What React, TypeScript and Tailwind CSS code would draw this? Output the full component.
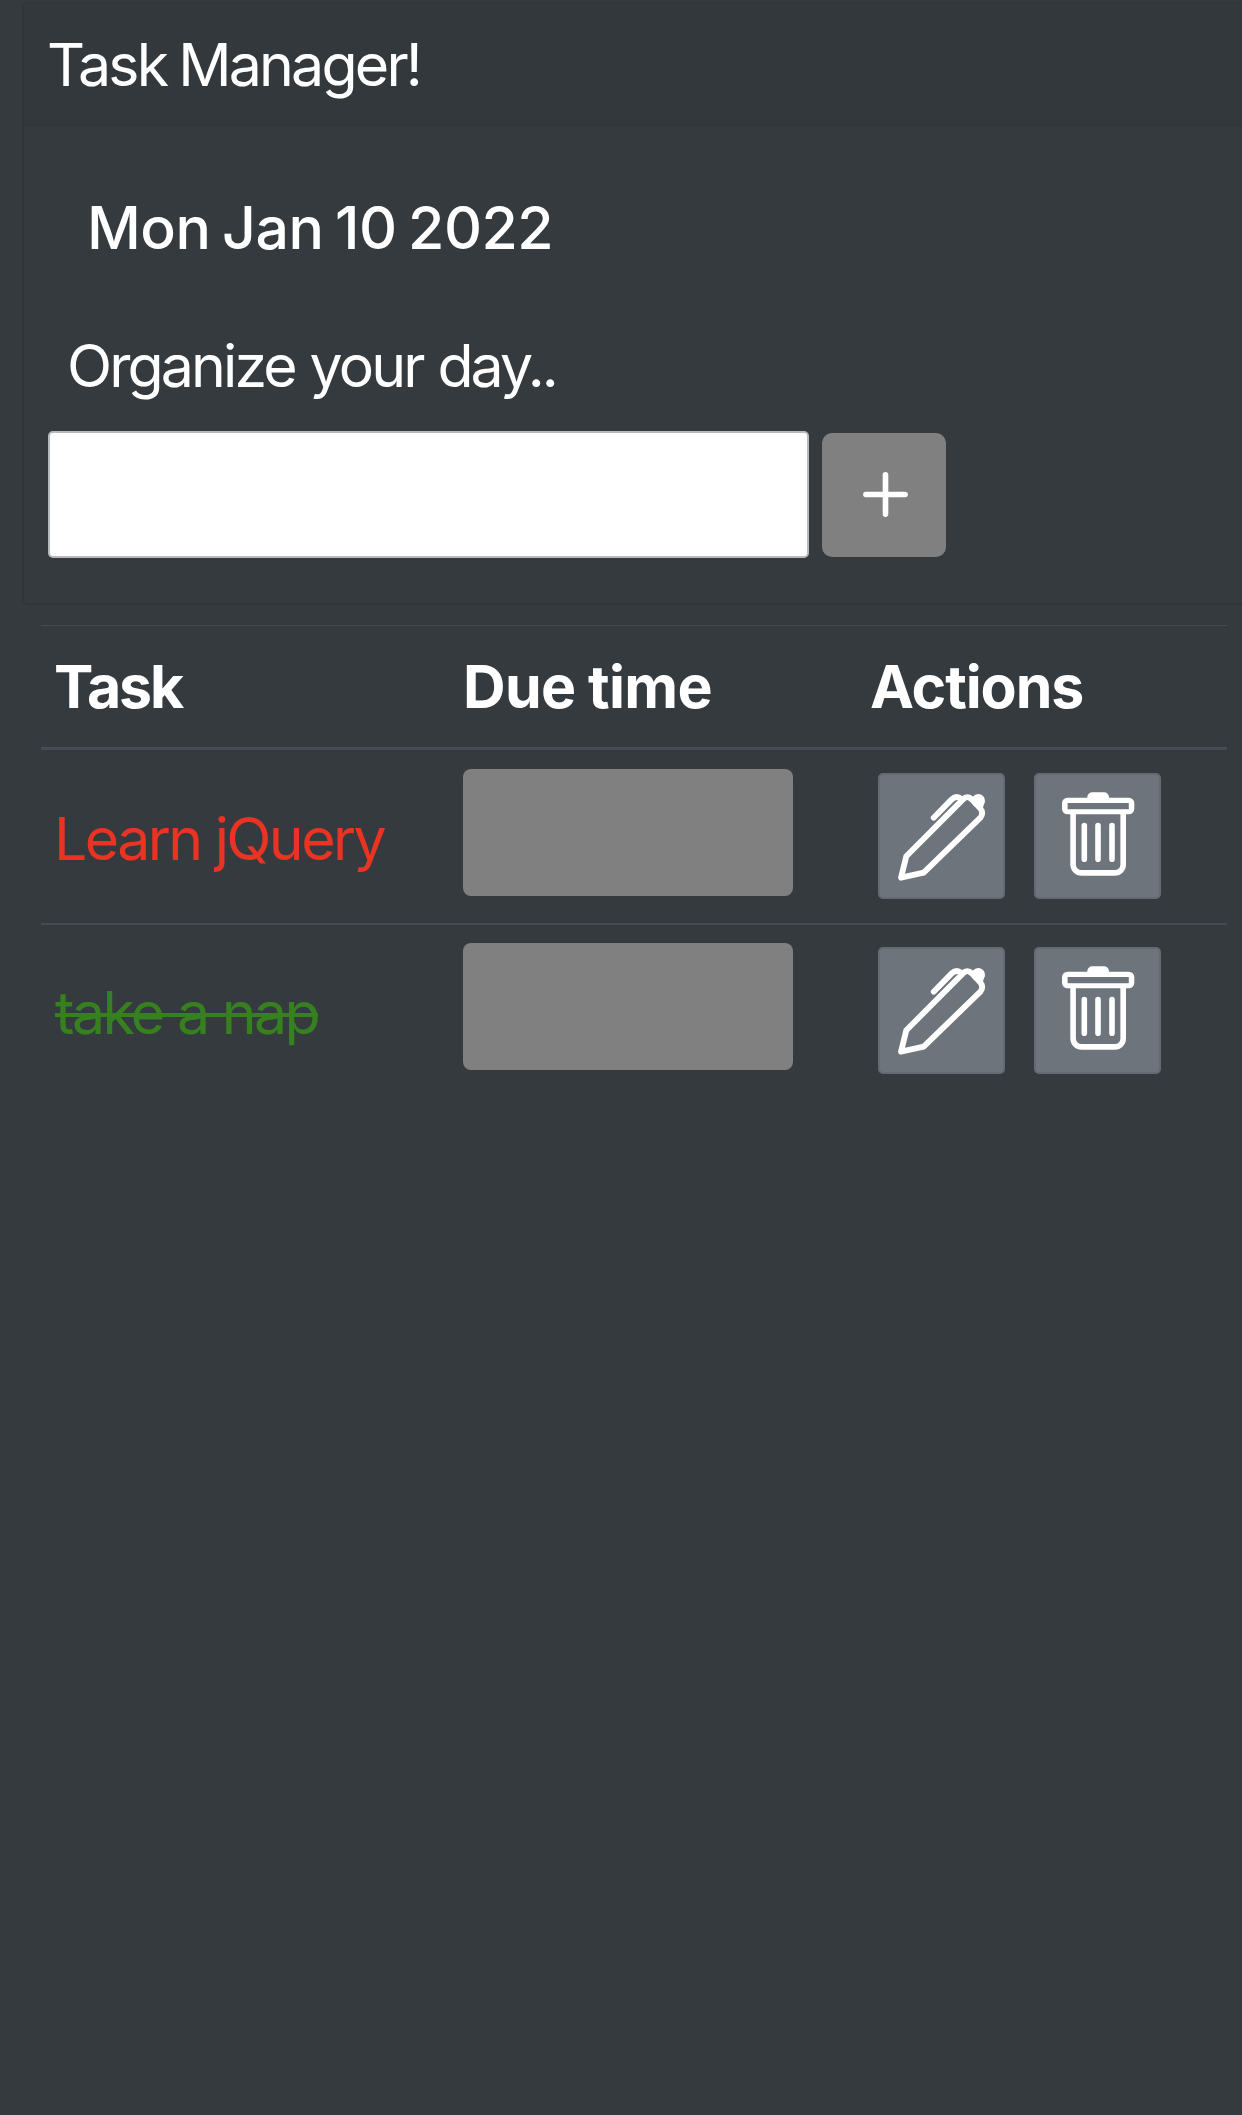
import React from 'react';

function PenIcon() {
  return (
    <svg className="block h-full w-full" viewBox="0 0 127 126" fill="none" stroke="white" strokeWidth="5.8" strokeLinecap="round" strokeLinejoin="round">
      <path d="M23 104.7 28.3 83.3 84.7 26.6Q89.3 21.8 94 26.6L102.4 35.6Q106 40 102.4 44.6L45.7 99.7Z" />
      <path d="M55.7 44.7 73.7 26.4Q78.5 21.8 83.3 25.8" />
      <path d="M93 26 104 38 106.5 29Z" fill="white" stroke="none" />
      <circle cx="100.3" cy="27.7" r="6.7" fill="white" stroke="none" />
    </svg>
  );
}

function TrashIcon() {
  return (
    <svg className="block h-full w-full" viewBox="0 0 127 126" fill="none" stroke="white" strokeWidth="5.6" strokeLinecap="round">
      <path d="M33.5 24.7H94.8a5.5 5.5 0 0 1 5.5 5.5V35.8a5.5 5.5 0 0 1-5.5 5.5H33.5a5.5 5.5 0 0 1-5.5-5.5V30.2a5.5 5.5 0 0 1 5.5-5.5ZM33.6 30.1V36.2H94.8V30.1Z" fill="white" fillRule="evenodd" stroke="none" />
      <path d="M53.3 26V24.3a5 5 0 0 1 5-5H70a5 5 0 0 1 5 5V26Z" fill="white" stroke="none" />
      <path d="M39.1 40V91.5a8.4 8.4 0 0 0 8.4 8.4H80.8a8.4 8.4 0 0 0 8.4-8.4V40" />
      <path d="M50.3 52.5V86.3M64 52.5V86.3M78 52.5V86.3" />
    </svg>
  );
}

const iconButton = "h-[126.4px] w-[127px] rounded-[5px] border-2 border-[#646a73] bg-[#6d747b]";

function TaskRow({ children, last = false }: { children: React.ReactNode; last?: boolean }) {
  return (
    <div className={last ? "grid h-[174.6px] grid-cols-[408px_407px_1fr] pl-[14px]" : "grid h-[174.6px] grid-cols-[408px_407px_1fr] border-b-2 border-[#454b53] pl-[14px]"}>
      <div className={last ? "pt-[52px]" : "pt-[53px]"}>{children}</div>
      <div className="pt-[18.6px]">
        <div className="h-[127px] w-[330px] rounded-[8px] bg-[#808080]" />
      </div>
      <div className="flex gap-[29px] pt-[22.6px] pl-[8px]">
        <button className={iconButton} aria-label="Edit"><span className="-m-[2px] block h-[126px] w-[127px]"><PenIcon /></span></button>
        <button className={iconButton} aria-label="Delete"><span className="-m-[2px] block h-[126px] w-[127px]"><TrashIcon /></span></button>
      </div>
    </div>
  );
}

export default function App() {
  return (
    <div className="h-[2115px] w-[1242px] overflow-hidden bg-[#353a3e] pt-[2px] font-['Inter',sans-serif] text-[59px] leading-[72px] whitespace-nowrap text-white">
      <div className="ml-[22px] h-[603px] rounded-l-[6px] border-2 border-r-0 border-[#313539]">
        <div className="h-[122px] border-b-2 border-[#323539] bg-[#33383c] pt-[25px] pl-[23px] tracking-[-2.8px] [word-spacing:-1.8px]">Task Manager!</div>
        <div className="pt-[66px] pl-[63px] font-medium tracking-[-0.5px] [word-spacing:-3.7px]">Mon Jan 10 2022</div>
        <div className="pt-[66px] pl-[43px] tracking-[-2.9px] [word-spacing:1.2px]">Organize your day..</div>
        <div className="mt-[29px] flex items-center gap-[13px] pl-[24px]">
          <input className="h-[127px] w-[761px] rounded-[5px] border-2 border-[#b6babf] bg-white" />
          <button className="flex h-[124px] w-[124px] items-center justify-center rounded-[10px] bg-[#808080]" aria-label="Add">
            <svg className="ml-[2px] h-[45px] w-[45px]" viewBox="0 0 45 45" stroke="white" strokeWidth="5.6" strokeLinecap="round">
              <path d="M22.5 2.9V42.1M2.9 22.5H42.1" />
            </svg>
          </button>
        </div>
      </div>
      <div className="mt-[20px] ml-[41px] w-[1186px]">
        <div className="grid h-[125px] grid-cols-[409px_407px_1fr] border-t-[1.5px] border-b-[3px] border-[#454b53] pt-[25px] pl-[13px] font-bold">
          <div className="tracking-[-2.12px]">Task</div>
          <div className="tracking-[-0.66px] [word-spacing:-0.81px]">Due time</div>
          <div className="tracking-[-1.1px]">Actions</div>
        </div>
        <TaskRow><span className="-ml-px tracking-[-2.6px] text-[#ea3323] [word-spacing:0.2px]">Learn jQuery</span></TaskRow>
        <TaskRow last><span className="tracking-[-2.65px] text-[#37801f] line-through decoration-[4px] [word-spacing:0.4px]">take a nap</span></TaskRow>
      </div>
    </div>
  );
}
